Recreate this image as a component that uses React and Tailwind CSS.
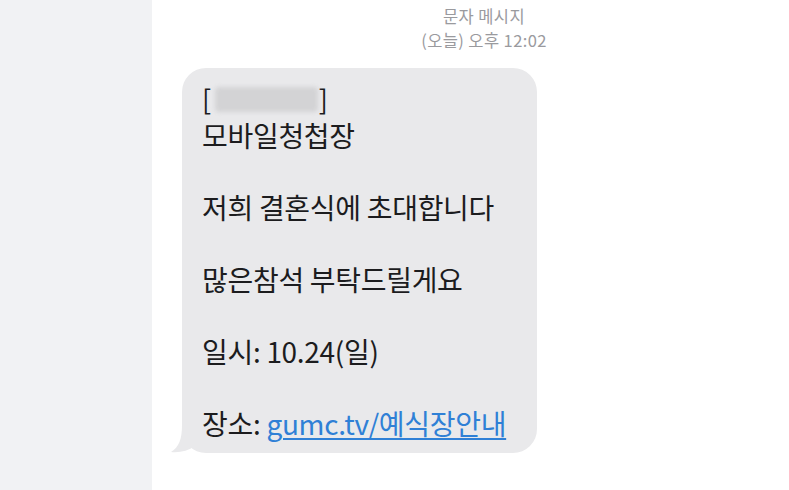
import React from 'react';

const font = { fontFamily: '"Noto Sans CJK KR", "Noto Sans", sans-serif' };

function BubbleTail() {
  return (
    <svg
      className="absolute left-[-11px] bottom-0"
      width="34"
      height="28"
      viewBox="0 0 34 28"
    >
      <path d="M11 0 C11 14 8 22 0 27 C8 28 17 26 24 21 L34 21 L34 0 Z" fill="#e9e9eb" />
    </svg>
  );
}

function App() {
  return (
    <div className="w-[789px] h-[490px] flex bg-white overflow-hidden" style={font}>
      {/* left panel */}
      <div className="w-[152px] h-full bg-[#f1f2f4]" />

      {/* conversation */}
      <div className="flex-1 flex flex-col">
        <div className="ml-[222px] w-[220px] pt-[4px] text-center text-[16.5px] leading-[24px] tracking-[0.4px] text-[#9a9a9e]">
          <div>문자 메시지</div>
          <div>(오늘) 오후 12:02</div>
        </div>

        <div className="relative ml-[30px] mt-[16px] w-[355px] rounded-[24px] bg-[#e9e9eb] pl-[20px] pr-2 pt-[13px] pb-[12px] text-[28px] leading-[36px] tracking-[-0.3px] text-[#1c1c1e]">
          <div className="relative z-10">
            <div className="flex h-[36px] items-center text-[27px] leading-[30px]">
              <span>[</span>
              <span className="inline-block ml-[4px] mr-[1px] w-[103px] h-[25px] rounded-[4px] bg-[#d3d3d5] blur-[2px]" />
              <span>]</span>
            </div>
            <div>모바일청첩장</div>
            <div>&nbsp;</div>
            <div>저희 결혼식에 초대합니다</div>
            <div>&nbsp;</div>
            <div>많은참석 부탁드릴게요</div>
            <div>&nbsp;</div>
            <div>일시: 10.24(일)</div>
            <div>&nbsp;</div>
            <div className="whitespace-nowrap">
              장소: <span className="text-[#2f80d6] underline underline-offset-[3px] decoration-[1.5px]">gumc.tv/예식장안내</span>
            </div>
          </div>
          <BubbleTail />
        </div>
      </div>
    </div>
  );
}

export default App;
